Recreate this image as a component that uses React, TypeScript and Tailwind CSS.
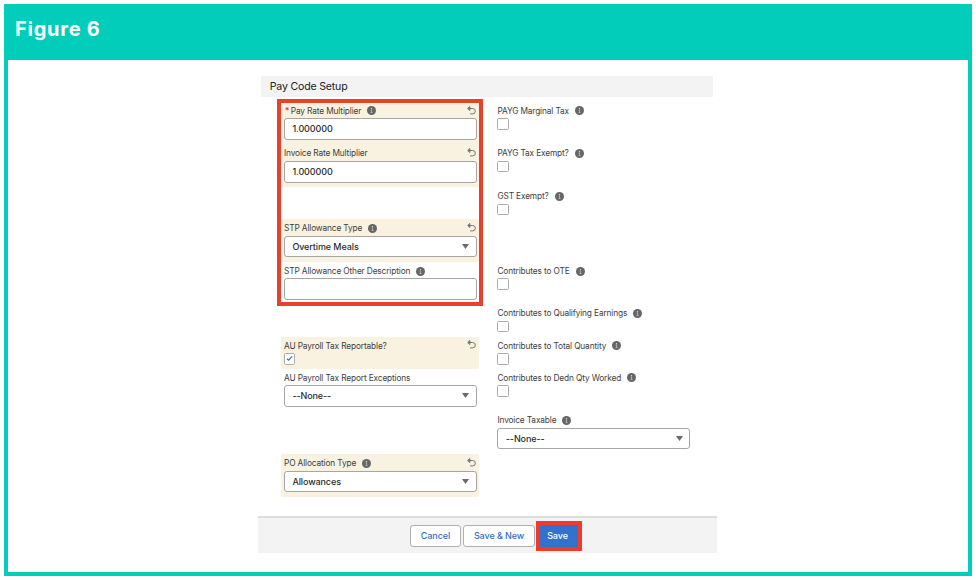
import React, { useState } from 'react';

interface Field {
  label: string;
  type: 'text' | 'select' | 'checkbox';
  value?: string;
  checked?: boolean;
  required?: boolean;
  info?: boolean;
  edited?: boolean;
}

interface Row {
  short?: boolean;
  left?: Field;
  right?: Field;
}

const rows: Row[] = [
  {
    left: { label: 'Pay Rate Multiplier', type: 'text', value: '1.000000', required: true, info: true, edited: true },
    right: { label: 'PAYG Marginal Tax', type: 'checkbox', info: true },
  },
  {
    left: { label: 'Invoice Rate Multiplier', type: 'text', value: '1.000000', edited: true },
    right: { label: 'PAYG Tax Exempt?', type: 'checkbox', info: true },
  },
  { short: true, right: { label: 'GST Exempt?', type: 'checkbox', info: true } },
  { left: { label: 'STP Allowance Type', type: 'select', value: 'Overtime Meals', info: true, edited: true } },
  {
    left: { label: 'STP Allowance Other Description', type: 'text', value: '', info: true },
    right: { label: 'Contributes to OTE', type: 'checkbox', info: true },
  },
  { short: true, right: { label: 'Contributes to Qualifying Earnings', type: 'checkbox', info: true } },
  {
    short: true,
    left: { label: 'AU Payroll Tax Reportable?', type: 'checkbox', checked: true, edited: true },
    right: { label: 'Contributes to Total Quantity', type: 'checkbox', info: true },
  },
  {
    left: { label: 'AU Payroll Tax Report Exceptions', type: 'select', value: '--None--' },
    right: { label: 'Contributes to Dedn Qty Worked', type: 'checkbox', info: true },
  },
  { right: { label: 'Invoice Taxable', type: 'select', value: '--None--', info: true } },
  { left: { label: 'PO Allocation Type', type: 'select', value: 'Allowances', info: true, edited: true } },
];

const InfoIcon: React.FC = () => (
  <svg viewBox="0 0 18 18" className="ml-[6px] size-[9px] shrink-0">
    <circle cx="9" cy="9" r="9" fill="#666" />
    <circle cx="9" cy="5.4" r="1.4" fill="#ddd" />
    <path d="M7.4 8.4h1.8v4.4M7.2 13h3.8" fill="none" stroke="#ddd" strokeWidth="1.2" />
  </svg>
);

const UndoIcon: React.FC = () => (
  <svg viewBox="0 0 18 18" className="size-[9px]" fill="none" stroke="#757575" strokeWidth="2" strokeLinecap="round" strokeLinejoin="round">
    <path d="M5.2 1.4 1.4 5l3.8 3.6z" fill="#757575" />
    <path d="M3 5h8.2a5.2 5.2 0 0 1 0 10.8H7" />
  </svg>
);

const FieldCell: React.FC<{ field?: Field }> = ({ field }) => {
  const [checked, setChecked] = useState(Boolean(field?.checked));

  if (!field) return <div />;

  return (
    <div className={`pl-[3px] pr-[2.4px] ${field.edited ? 'bg-[#faf2e0]' : ''}`}>
      <div className="flex h-[16.3px] items-center pt-[1.5px]">
        {field.required && <span className="ml-[1px] mr-[1.5px] text-[8.5px] text-[#c23934]">*</span>}
        <span className="whitespace-nowrap text-[8.3px] text-[#3e3e3e] tracking-[-0.13px]">{field.label}</span>
        {field.info && <InfoIcon />}
        {field.edited && (
          <button className="ml-auto mr-[1px] mb-[1.6px]" aria-label="Undo">
            <UndoIcon />
          </button>
        )}
      </div>

      {field.type === 'checkbox' ? (
        <button
          role="checkbox"
          aria-checked={checked}
          onClick={() => setChecked(!checked)}
          className="flex size-[11.4px] items-center justify-center rounded-[1.5px] border border-[#ababab] bg-white"
        >
          {checked && (
            <svg viewBox="0 0 12 12" className="size-[7px]" fill="none" stroke="#2574cf" strokeWidth="2">
              <path d="M1.5 6.5 4.5 9l6-6.5" />
            </svg>
          )}
        </button>
      ) : (
        <div className="flex h-[21.6px] items-center justify-between rounded-[3px] border border-[#a6a6a6] bg-white pl-[7.4px] pr-[6.4px]">
          <span className="text-[9px] font-medium tracking-[-0.1px] text-[#2b2b2b]">{field.value}</span>
          {field.type === 'select' && (
            <svg viewBox="0 0 7 5" className="h-[5px] w-[7px]" fill="#6a6a6a">
              <path d="M0 0h7L3.5 5z" />
            </svg>
          )}
        </div>
      )}
    </div>
  );
};

const App: React.FC = () => {
  return (
    <div className="h-[580px] w-[976px] bg-white p-1 font-['Inter','Liberation_Sans',sans-serif]">
      <div className="flex h-[572px] flex-col border-4 border-t-0 border-[#02cdbb] bg-white">
        <header className="h-14 shrink-0 bg-[#02cdbb] pl-[7px] pt-[11px]">
          <h1 className="text-[20px] leading-7 font-bold tracking-[0.75px] text-white">Figure 6</h1>
        </header>

        <main className="ml-[250px] w-[459px] pt-4">
          <h2 className="ml-[3px] flex h-[21px] w-[452px] items-center bg-[#f3f3f3] pl-[8.8px] text-[10.6px] tracking-[-0.2px] text-[#222]">
            Pay Code Setup
          </h2>

          <div className="relative ml-[23px] mt-[5px] w-[411px]">
            {rows.map((row, index) => (
              <div
                key={index}
                className={`grid grid-cols-[198px_198px] gap-[15.4px] ${row.short ? 'h-[32.05px]' : 'h-[42.7px]'}`}
              >
                <FieldCell field={row.left} />
                <FieldCell field={row.right} />
              </div>
            ))}
            {/* Highlight around the pay rate and STP fields */}
            <div className="pointer-events-none absolute -left-[4px] -top-[3px] h-[207px] w-[206px] border-4 border-[#e8412b]" />
          </div>

          <footer className="mt-[19px] flex h-[37px] items-center justify-center border-t-2 border-[#dddddd] bg-[#f3f3f3] pt-px pl-[17px] text-[9px] font-medium tracking-[-0.1px] text-[#2f70c8]">
            <button className="h-[22px] w-[51px] rounded-[3px] border border-[#b0b0b0] bg-white">Cancel</button>
            <button className="ml-[2px] h-[22px] w-[72px] rounded-[3px] border border-[#b0b0b0] bg-white">Save &amp; New</button>
            <button className="ml-[1px] h-[30px] w-[46px] border-4 border-[#ef3b2c] bg-[#3272cd] pr-[3px] text-white">Save</button>
          </footer>
        </main>
      </div>
    </div>
  );
};

export default App;
